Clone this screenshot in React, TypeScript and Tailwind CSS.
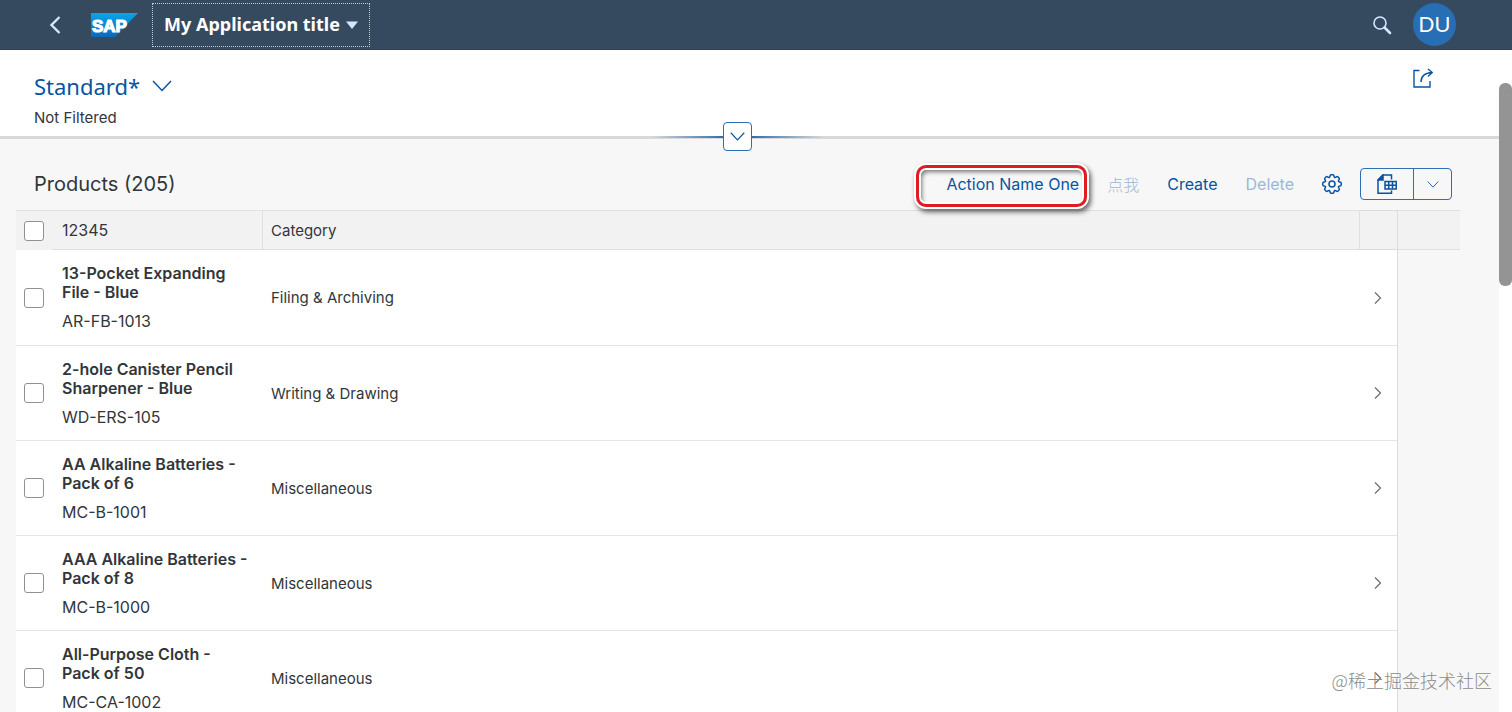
import React, { useState } from "react";

interface Product {
  id: string;
  name: string;
  category: string;
}

const products: Product[] = [
  { id: "AR-FB-1013", name: "13-Pocket Expanding File - Blue", category: "Filing & Archiving" },
  { id: "WD-ERS-105", name: "2-hole Canister Pencil Sharpener - Blue", category: "Writing & Drawing" },
  { id: "MC-B-1001", name: "AA Alkaline Batteries - Pack of 6", category: "Miscellaneous" },
  { id: "MC-B-1000", name: "AAA Alkaline Batteries - Pack of 8", category: "Miscellaneous" },
  { id: "MC-CA-1002", name: "All-Purpose Cloth - Pack of 50", category: "Miscellaneous" },
];

const checkboxClass =
  "block size-5 appearance-none rounded-[3px] border border-[#8f9193] bg-white checked:bg-[#0854a0]";

function ChevronDown({ className = "" }: { className?: string }) {
  return (
    <svg className={className} viewBox="0 0 20 12" fill="none" stroke="currentColor" aria-hidden="true">
      <path d="M1 1l9 9.5L19 1" strokeWidth={1.5} />
    </svg>
  );
}

function GearIcon() {
  // one tooth, repeated around the hub
  const angles = [0, 45, 90, 135, 180, 225, 270, 315];
  return (
    <svg className="size-5" viewBox="0 0 20 20" fill="none" stroke="currentColor" strokeWidth={1.5} aria-hidden="true">
      <g transform="translate(10 10)">
        {angles.map((angle) => (
          <path
            key={angle}
            transform={`rotate(${angle})`}
            strokeLinecap="round"
            d="M6.560-2.720Q7-2 7.800-2Q9.200-1.800 9.200-1V1Q9.200 1.800 7.800 2Q7 2 6.560 2.720"
          />
        ))}
        <circle r="3" />
      </g>
    </svg>
  );
}

function SapLogo() {
  return (
    <svg className="h-6 w-[47px]" viewBox="0 0 47 24" role="img" aria-label="SAP">
      <defs>
        <linearGradient id="sap-blue" x1="0" y1="0" x2="0" y2="1">
          <stop offset="0" stopColor="#0aa5e6" />
          <stop offset="1" stopColor="#0a68bd" />
        </linearGradient>
      </defs>
      <path d="M0 0h47L24 24H0z" fill="url(#sap-blue)" />
      <text
        x="1"
        y="19"
        fill="#fff"
        stroke="#fff"
        strokeWidth="1.2"
        fontSize="17"
        fontWeight="700"
        fontFamily="Liberation Sans, sans-serif"
      >
        SAP
      </text>
    </svg>
  );
}

function ShellBar() {
  return (
    <header className="flex h-[50px] shrink-0 items-center border-b border-[#2b4257] bg-[#354a5f] pr-14 pl-[49px] text-[#d1e8ff]">
      <button type="button" aria-label="Back">
        <svg className="h-5 w-3" viewBox="0 0 12 20" fill="none" stroke="currentColor" aria-hidden="true">
          <path d="M10.500 2L2.500 10l8 8" strokeWidth={2.4} />
        </svg>
      </button>
      <a href="#home" className="ml-[30px]">
        <SapLogo />
      </a>
      <button
        type="button"
        className="ml-[14px] flex h-[44px] items-center gap-[6px] border border-dotted border-[#c3ccd5] px-[11px] font-['Noto_Sans'] text-[18px] font-bold whitespace-nowrap text-white"
      >
        My Application title
        <svg className="h-2 w-3 text-[#d1e8ff]" viewBox="0 0 12 8" aria-hidden="true">
          <path d="M0 0.500h12L6 8z" fill="currentColor" />
        </svg>
      </button>
      <div className="ml-auto flex items-center gap-[21px]">
        <button type="button" aria-label="Search">
          <svg className="size-5" viewBox="0 0 20 20" fill="none" stroke="currentColor" aria-hidden="true">
            <circle cx="8" cy="8" r="6" strokeWidth={1.6} />
            <path d="M12.500 12.500l5.500 5.500" strokeWidth={2.6} strokeLinecap="round" />
          </svg>
        </button>
        <button
          type="button"
          aria-label="Profile of Default User"
          className="size-[43px] rounded-full bg-[#286eb4] font-['Liberation_Sans'] text-[22px] text-white"
        >
          DU
        </button>
      </div>
    </header>
  );
}

function FilterHeader() {
  return (
    <section className="relative border-b-[3px] border-[#d9d9d9] bg-white pt-5 pr-[66px] pb-[7px] pl-[34px]">
      <div className="flex items-start justify-between">
        <button type="button" className="flex items-center gap-3 font-['Noto_Sans'] text-[22px] leading-8 text-[#0854a0]">
          Standard*
          <ChevronDown className="h-3 w-5" />
        </button>
        <button type="button" aria-label="Share" className="-mt-[2px] text-[#0854a0]">
          <svg className="size-5" viewBox="0 0 20 20" fill="none" stroke="currentColor" strokeWidth={1.4} aria-hidden="true">
            <path d="M6.500 2.500H1V19h16v-6" />
            <path d="M8 14c0-6 3-9 11-9.500M15 1l4.200 3.500L15 8.500" />
          </svg>
        </button>
      </div>
      <p className="mt-[5px] text-[15px] leading-[22px]">Not Filtered</p>
      {/* expand handle sits on the bottom edge */}
      <div className="absolute inset-x-0 -bottom-[15px] flex items-center justify-center pr-6">
        <span className="h-[2px] w-18 bg-gradient-to-r from-transparent to-[#2f6fb3]" />
        <button
          type="button"
          aria-label="Expand Header"
          className="flex size-[29px] items-center justify-center rounded border border-[#2f6fb3] bg-white text-[#0854a0]"
        >
          <ChevronDown className="h-[9px] w-[15px]" />
        </button>
        <span className="h-[2px] w-18 bg-gradient-to-l from-transparent to-[#2f6fb3]" />
      </div>
    </section>
  );
}

function TableToolbar() {
  return (
    <div className="flex items-center gap-7 pt-[29px] pr-2 pb-[10px] pl-[18px] text-[16px] text-[#0854a0]">
      <h2 className="mr-auto text-[20px] leading-8 text-[#32363a]">Products (205)</h2>
      <div className="relative">
        <button type="button">Action Name One</button>
        <span className="pointer-events-none absolute -top-[7px] -right-[8px] -bottom-[11px] -left-[30px] rounded-[10px] border-[3px] border-[#e01b22] shadow-[0_0_0_2px_#fff,2px_3px_5px_2px_rgba(0,0,0,0.6),inset_0_0_0_2px_#fff,inset_2px_3px_4px_1px_rgba(0,0,0,0.5)]" />
      </div>
      <button type="button" disabled className="font-['Noto_Sans_CJK_SC'] text-[16px] font-light text-[#9db8d5]">
        点我
      </button>
      <button type="button">Create</button>
      <button type="button" disabled className="text-[#9db8d5]">
        Delete
      </button>
      <button type="button" aria-label="Settings">
        <GearIcon />
      </button>
      <div className="-ml-[10px] flex h-8 w-[92px] rounded border border-[#2f6fb3]">
        <button type="button" aria-label="Export to Spreadsheet" className="flex flex-1 items-center justify-center border-r border-[#2f6fb3]">
          <svg className="size-5" viewBox="0 0 20 20" fill="none" stroke="currentColor" strokeWidth={1.5} aria-hidden="true">
            <path d="M14.500 5.500V1H6L1 6v13.200h13.500V16.500" />
            <path d="M6 1v5H1z" fill="currentColor" />
            <path d="M8 7.500h11.200v7.500H8zM8 11.200h11.200M11.700 7.500V15M15.500 7.500V15" />
          </svg>
        </button>
        <button type="button" aria-label="More export options" className="flex w-[37px] items-center justify-center">
          <ChevronDown className="h-[7px] w-3" />
        </button>
      </div>
    </div>
  );
}

function ProductTable() {
  const [selected, setSelected] = useState<string[]>([]);

  const toggle = (id: string) => {
    setSelected((prev) => (prev.includes(id) ? prev.filter((p) => p !== id) : [...prev, id]));
  };

  const toggleAll = () => {
    setSelected((prev) => (prev.length === products.length ? [] : products.map((p) => p.id)));
  };

  return (
    <table className="w-full table-fixed border-separate border-spacing-0 text-left text-[15px] leading-[19px]">
      <colgroup>
        <col className="w-9" />
        <col className="w-[211px]" />
        <col />
        <col className="w-[38px]" />
        <col className="w-[62px]" />
      </colgroup>
      <thead>
        <tr className="h-10 bg-[#f2f2f2]">
          <th className="border-t border-[#e0e0e0] p-0 pl-2">
            <input
              type="checkbox"
              aria-label="Select all"
              className={checkboxClass}
              checked={selected.length === products.length}
              onChange={toggleAll}
            />
          </th>
          <th className="border-y border-r border-[#e0e0e0] p-0 pl-[10px] text-[16px] font-normal">12345</th>
          <th className="border-y border-r border-[#e0e0e0] p-0 pl-2 font-normal">Category</th>
          <th className="border-y border-r border-[#dcdcdc] p-0" aria-label="Navigation" />
          <th className="border-y border-[#e0e0e0] p-0" aria-hidden="true" />
        </tr>
      </thead>
      <tbody>
        {products.map((product) => (
          <tr key={product.id} className="h-[95px] first:h-24">
            <td className="border-b border-[#e5e5e5] bg-white p-0 pl-2">
              <input
                type="checkbox"
                aria-label={`Select ${product.name}`}
                className={checkboxClass}
                checked={selected.includes(product.id)}
                onChange={() => toggle(product.id)}
              />
            </td>
            <td className="border-b border-[#e5e5e5] bg-white py-0 pr-3 pl-[10px] text-[16px]">
              <div className="font-semibold">{product.name}</div>
              <div className="mt-[10px]">{product.id}</div>
            </td>
            <td className="border-b border-[#e5e5e5] bg-white p-0 pl-2">{product.category}</td>
            <td className="border-r border-b border-r-[#dcdcdc] border-b-[#e5e5e5] bg-white p-0 pl-[14px] text-[#6a6d70]">
              <svg className="h-3 w-2" viewBox="0 0 8 12" fill="none" stroke="currentColor" aria-hidden="true">
                <path d="M1 0.500L6.500 6 1 11.500" strokeWidth={1.2} />
              </svg>
            </td>
            <td className="p-0" />
          </tr>
        ))}
      </tbody>
    </table>
  );
}

export default function App() {
  return (
    <div className="relative flex h-screen flex-col overflow-hidden bg-[#f7f7f7] font-['Inter','Noto_Sans_CJK_SC',sans-serif] text-[#32363a]">
      <ShellBar />
      <div className="flex min-h-0 flex-1">
        <main className="min-w-0 flex-1">
          <FilterHeader />
          <div className="pr-[39px] pl-4">
            <TableToolbar />
            <ProductTable />
          </div>
        </main>
        {/* scroll track */}
        <div className="w-[13px] shrink-0 bg-white pt-[33px]">
          <div className="h-[203px] rounded-md bg-[#949494]" />
        </div>
      </div>
      <div className="pointer-events-none absolute right-5 bottom-5 font-['Noto_Sans_CJK_SC',sans-serif] text-[18px] leading-6 font-light text-[#8c8c8c]">
        @稀土掘金技术社区
      </div>
    </div>
  );
}
